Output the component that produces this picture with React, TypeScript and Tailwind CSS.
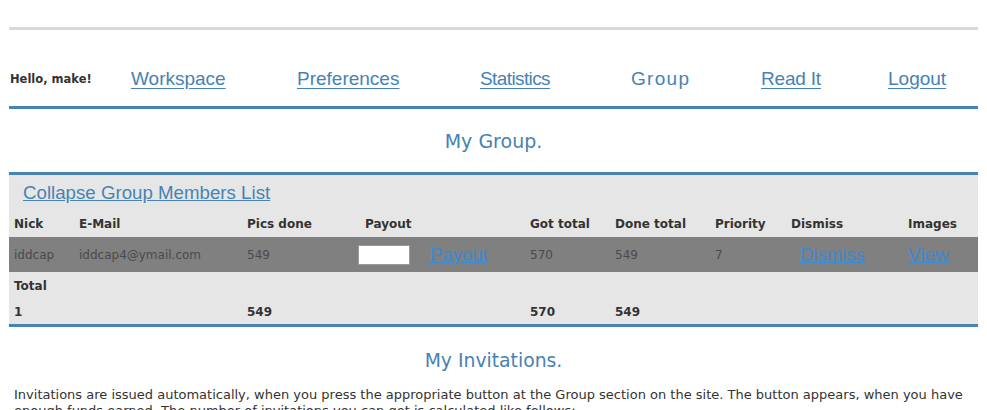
import React from "react";

const cols = "grid grid-cols-[65px_168px_111px_72px_100px_85px_100px_76px_117px_1fr] pl-[5px] items-center";

export default function App() {
  return (
    <div className="min-h-[410px] bg-white font-['DejaVu_Sans',sans-serif] text-[#333]">
      <div className="mx-auto w-[969px] pt-[27px]">
        <div className="h-[3px] bg-[#d9d9d9]" />
        <div className="grid h-[76px] grid-cols-[121px_166px_183px_151px_130px_127px_1fr] items-center pl-[1px] pt-[23px]">
          <span className="text-[11.5px] font-bold text-[#333]">Hello, make!</span>
          <a className="font-['Liberation_Sans',Arial,sans-serif] text-[19px] text-[#4682b4] underline underline-offset-[3px]" href="#">Workspace</a>
          <a className="font-['Liberation_Sans',Arial,sans-serif] text-[19px] text-[#4682b4] underline underline-offset-[3px]" href="#">Preferences</a>
          <a className="font-['Liberation_Sans',Arial,sans-serif] text-[19px] tracking-[-0.6px] text-[#4682b4] underline underline-offset-[3px]" href="#">Statistics</a>
          <span className="font-['Liberation_Sans',Arial,sans-serif] text-[19px] tracking-[1.3px] text-[#4682b4]">Group</span>
          <a className="font-['Liberation_Sans',Arial,sans-serif] text-[19px] tracking-[-0.2px] text-[#4682b4] underline underline-offset-[3px]" href="#">Read It</a>
          <a className="font-['Liberation_Sans',Arial,sans-serif] text-[19px] text-[#4682b4] underline underline-offset-[3px]" href="#">Logout</a>
        </div>
        <div className="h-[3px] bg-[#4682b4]" />
        <div className="flex h-[63px] items-center justify-center pt-[1px]">
          <h2 className="text-[19px] text-[#4682b4]">My Group.</h2>
        </div>
        <div className="border-y-[3px] border-[#4682b4] bg-[#e6e6e6]">
          <div className="flex h-[35px] items-center pl-[14px] pt-[1px]">
            <a className="font-['Liberation_Sans',Arial,sans-serif] text-[18.7px] text-[#4682b4] underline" href="#">Collapse Group Members List</a>
          </div>
          <div className={`${cols} h-[27px] pt-[1px] text-[12px] font-bold text-[#333]`}>
            <span>Nick</span>
            <span>E-Mail</span>
            <span>Pics done</span>
            <span className="pl-[7px]">Payout</span>
            <span />
            <span>Got total</span>
            <span>Done total</span>
            <span>Priority</span>
            <span>Dismiss</span>
            <span>Images</span>
          </div>
          <div className={`${cols} h-[35px] bg-[#808080] pt-[1px] text-[12px] text-[#4a4a4a]`}>
            <span>iddcap</span>
            <span>iddcap4@ymail.com</span>
            <span>549</span>
            <span>
              <span className="block h-[20px] w-[52px] border border-[#9a9a9a] bg-white" />
            </span>
            <a className="font-['Liberation_Sans',Arial,sans-serif] text-[18.5px] text-[#3b8ad4] underline" href="#">Payout</a>
            <span>570</span>
            <span>549</span>
            <span>7</span>
            <a className="pl-[9px] font-['Liberation_Sans',Arial,sans-serif] text-[18.5px] text-[#3b8ad4] underline" href="#">Dismiss</a>
            <a className="font-['Liberation_Sans',Arial,sans-serif] text-[19px] text-[#3b8ad4] underline" href="#">View</a>
          </div>
          <div className={`${cols} h-[27px] pt-[1px] text-[12px] font-bold text-[#333]`}>
            <span>Total</span>
          </div>
          <div className={`${cols} h-[25px] pt-[1px] text-[12px] font-bold text-[#333]`}>
            <span>1</span>
            <span />
            <span>549</span>
            <span />
            <span />
            <span>570</span>
            <span>549</span>
          </div>
        </div>
        <div className="flex h-[60px] items-center justify-center pt-[9px]">
          <h2 className="text-[18.8px] text-[#4682b4]">My Invitations.</h2>
        </div>
        <p className="pl-[5px] text-[13px] leading-[16px] text-[#333]">
          Invitations are issued automatically, when you press the appropriate button at the Group section on the site. The button appears, when you have enough funds earned. The number of invitations you can get is calculated like follows:
        </p>
      </div>
    </div>
  );
}
